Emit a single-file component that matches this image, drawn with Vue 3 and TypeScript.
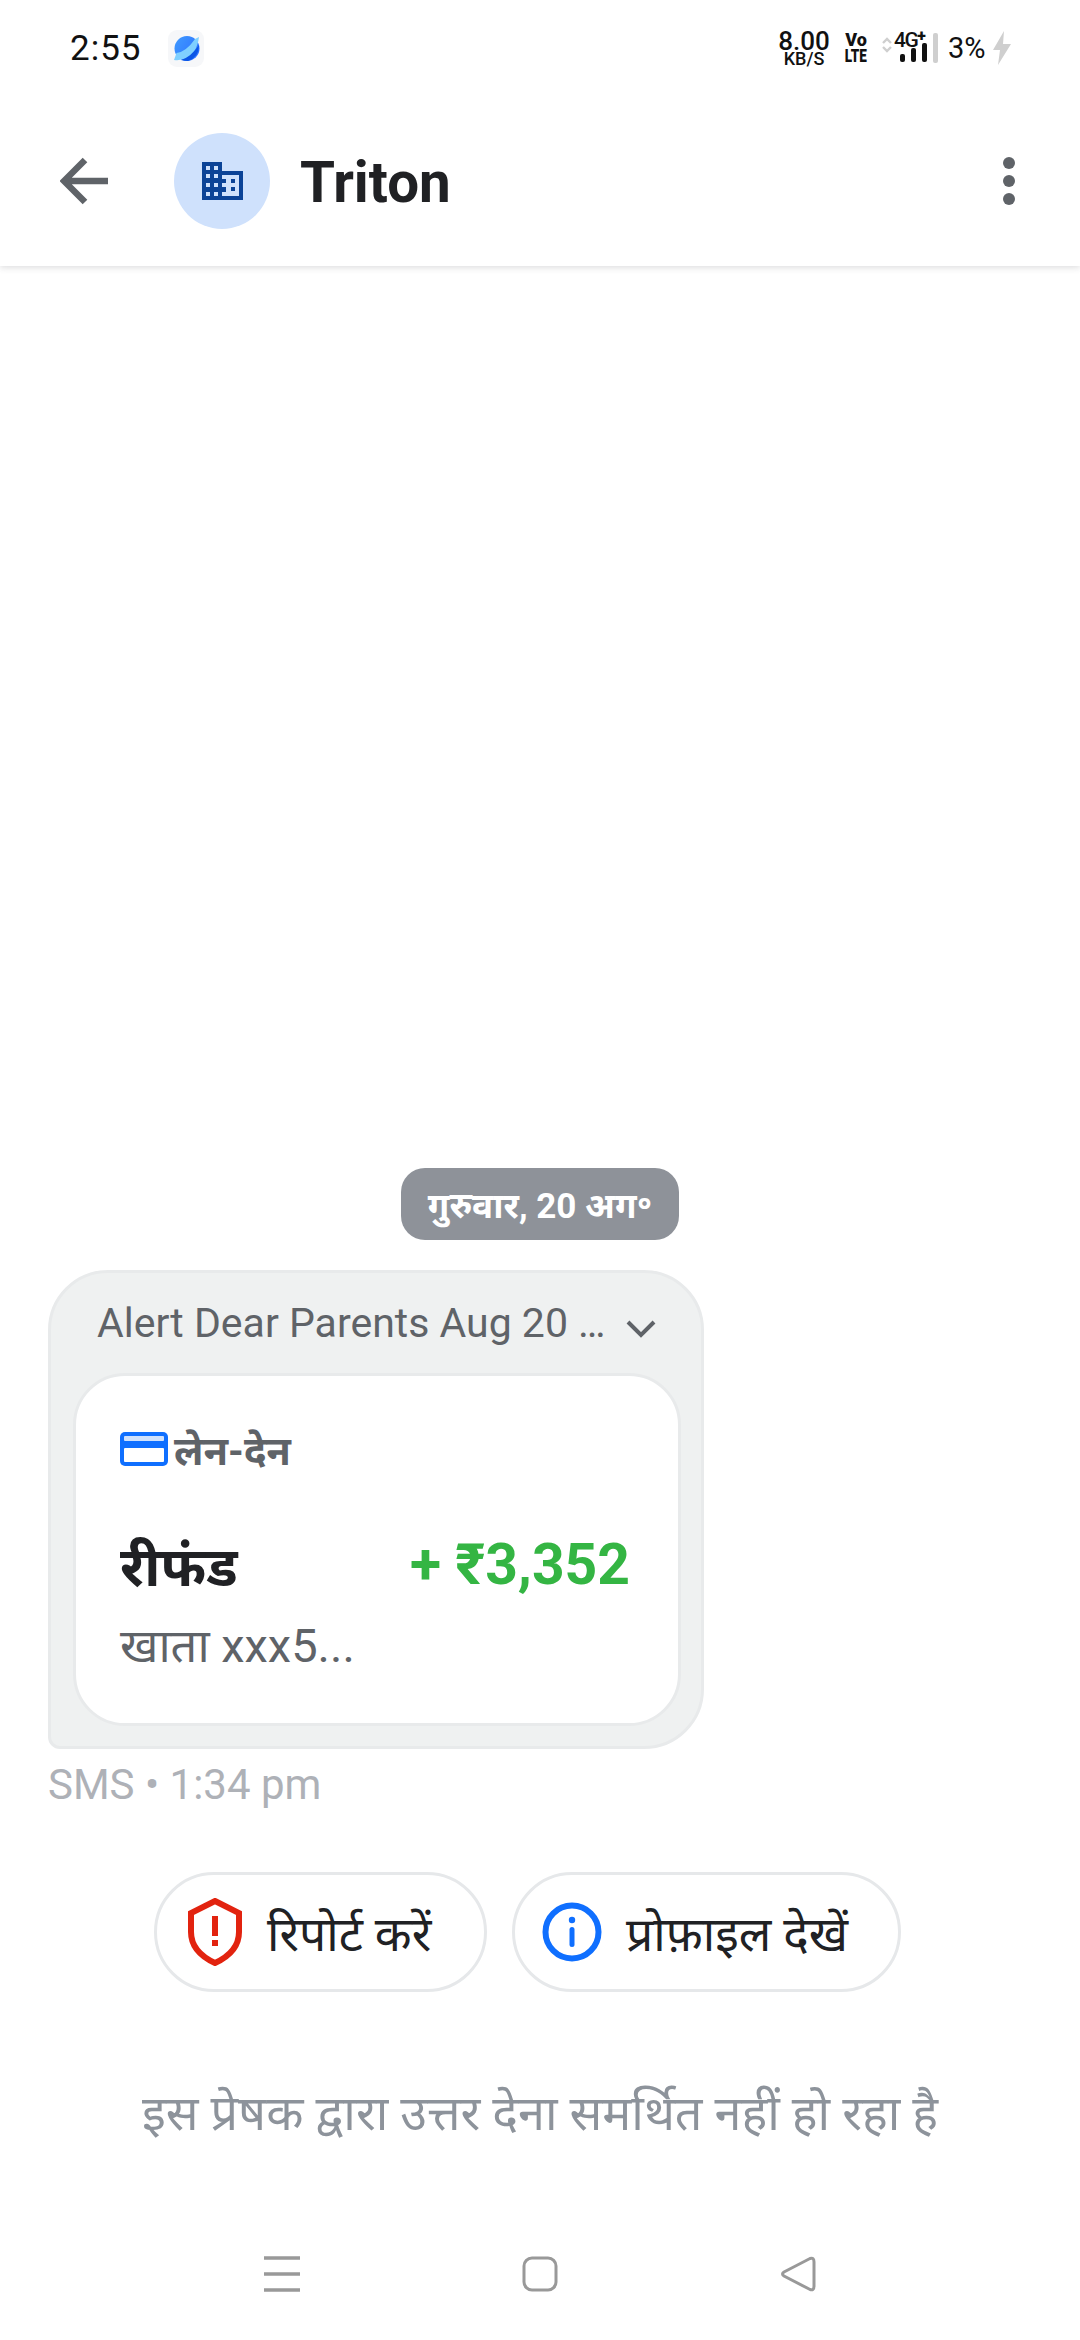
<script setup lang="ts">
const title = 'Triton'
</script>

<template>
  <div class="page">
    <div class="status">
      <span class="time">2:55</span>
      <svg class="appicon" viewBox="0 0 36 37" width="36" height="37">
        <defs>
          <linearGradient id="pl" x1="0" y1="0" x2="1" y2="0.6">
            <stop offset="0" stop-color="#3f9bff" />
            <stop offset="1" stop-color="#2f74ff" />
          </linearGradient>
        </defs>
        <rect width="36" height="37" rx="9" fill="#f6f7f9" />
        <circle cx="19" cy="18.5" r="12.5" fill="url(#pl)" />
        <path d="M6 30 L8.5 23 Q18 22 27 9 L31 7 Q30 18 22 27 Q14 31 6 30Z" fill="#7fd0ff" />
        <path d="M13 30 Q23 27 31 15 Q31 27 20 31 Q16 31 13 30Z" fill="#0a55e6" />
      </svg>
      <span class="grow"></span>
      <div class="speed"><b>8.00</b><i>KB/S</i></div>
      <div class="volte"><b class="vo">Vo</b><b class="lte">LTE</b></div>
      <svg class="arrows" viewBox="0 0 10 16" width="10" height="16">
        <path d="M1 6 L5 2 L9 6 M1 10 L5 14 L9 10" fill="none" stroke="#cfcfcf" stroke-width="2.4" />
      </svg>
      <div class="signal">
        <span class="fourg">4G<sup>+</sup></span>
        <div class="bars"><i class="b1"></i><i class="b2"></i><i class="b3"></i></div>
      </div>
      <i class="bar-off"></i>
      <span class="pct">3%</span>
      <svg class="bolt" viewBox="0 0 20 36" width="20" height="36">
        <path d="M12 1 L1 20 H8 L6 35 L19 14 H11Z" fill="#cfcfcf" />
      </svg>
    </div>

    <header class="head">
      <svg class="back" viewBox="0 0 48 48" width="48" height="48">
        <path d="M48 24 H4 M25 3 L4 24 L25 45" fill="none" stroke="#5f6368" stroke-width="6.5" />
      </svg>
      <div class="avatar">
        <svg viewBox="0 0 41 38" width="41" height="38">
          <path d="M0 0 H20 V9 H41 V38 H0Z" fill="#0b4397" />
          <g fill="#cfe1fc">
            <rect x="4" y="4" width="4" height="4" /><rect x="12" y="4" width="4" height="4" />
            <rect x="4" y="12" width="4" height="4" /><rect x="12" y="12" width="4" height="4" />
            <rect x="4" y="21" width="4" height="4" /><rect x="12" y="21" width="4" height="4" />
            <rect x="4" y="30" width="4" height="4" /><rect x="12" y="30" width="4" height="4" />
            <path d="M20 13 H37 V34 H20 V30 H24 V25 H20 V21 H24 V17 H20Z" />
          </g>
          <g fill="#0b4397">
            <rect x="29" y="17" width="4" height="4" /><rect x="29" y="25" width="4" height="4" />
          </g>
        </svg>
      </div>
      <h1 class="title">{{ title }}</h1>
      <span class="grow"></span>
      <div class="dots"><i></i><i></i><i></i></div>
    </header>

    <main class="thread">
      <div class="datewrap"><span class="date">गुरुवार, 20 अग॰</span></div>

      <div class="bubble">
        <div class="bubblehead">
          <span class="subject">Alert Dear Parents Aug 20 …</span>
          <svg viewBox="0 0 30 18" width="30" height="18">
            <path d="M2 2 L15 15 L28 2" fill="none" stroke="#5f6368" stroke-width="4" />
          </svg>
        </div>
        <div class="card">
          <div class="cat">
            <svg viewBox="0 0 48 34" width="48" height="34">
              <rect width="48" height="34" rx="5" fill="#0f6fff" />
              <rect x="4" y="4" width="40" height="5" rx="1" fill="#cfe1fc" />
              <rect x="4" y="16" width="40" height="14" rx="1" fill="#fff" />
            </svg>
            <span>लेन-देन</span>
          </div>
          <div class="row">
            <span class="kind">रीफंड</span>
            <span class="amount">+ ₹3,352</span>
          </div>
          <div class="acct">खाता xxx5...</div>
        </div>
      </div>

      <div class="meta">SMS • 1:34 pm</div>

      <div class="actions">
        <button class="pill p1">
          <svg viewBox="0 0 56 68" width="56" height="68">
            <path d="M28 3 L52 15 V34 C52 49 41 59 28 65 C15 59 4 49 4 34 V15Z" fill="none" stroke="#e2230f" stroke-width="6" />
            <rect x="25" y="18" width="6" height="20" fill="#e2230f" />
            <rect x="25" y="42" width="6" height="6" fill="#e2230f" />
          </svg>
          <span>रिपोर्ट करें</span>
        </button>
        <button class="pill p2">
          <svg viewBox="0 0 60 60" width="60" height="60">
            <circle cx="30" cy="30" r="26.5" fill="none" stroke="#0f6fff" stroke-width="6" />
            <circle cx="30" cy="18" r="3.2" fill="#0f6fff" />
            <rect x="27.5" y="25" width="5" height="20" rx="2.5" fill="#0f6fff" />
          </svg>
          <span>प्रोफ़ाइल देखें</span>
        </button>
      </div>

      <p class="note">इस प्रेषक द्वारा उत्तर देना समर्थित नहीं हो रहा है</p>
    </main>

    <nav class="navbar">
      <svg viewBox="0 0 36 36" width="36" height="36">
        <path d="M0 2 H36 M0 18 H36 M0 34 H36" stroke="#999" stroke-width="3.4" />
      </svg>
      <svg viewBox="0 0 36 36" width="36" height="36">
        <rect x="2" y="2" width="32" height="32" rx="8" fill="none" stroke="#999" stroke-width="3" />
      </svg>
      <svg viewBox="0 0 36 36" width="36" height="36">
        <path d="M30 2.5 Q34 1 34 6 V30 Q34 35 30 33.5 L4 20 Q1 18 4 16Z" fill="none" stroke="#999" stroke-width="3" />
      </svg>
    </nav>
  </div>
</template>

<style>
html, body { margin: 0; background: #fff; }
</style>

<style scoped>
.page {
  width: 1080px;
  height: 2340px;
  display: flex;
  flex-direction: column;
  background: #fff;
  font-family: Roboto, "Noto Sans", "Liberation Sans", sans-serif;
  overflow: hidden;
}
.grow { flex: 1; }
.status {
  height: 96px;
  flex: none;
  box-sizing: border-box;
  padding: 0 68px 0 70px;
  display: flex;
  align-items: center;
  color: #111;
}
.time { font-size: 35px; letter-spacing: 1px; width: 98px; }
.speed { display: flex; flex-direction: column; align-items: center; width: 52px; margin-right: 15px; }
.speed b { font-weight: 500; font-size: 26px; line-height: 21px; }
.speed i { font-style: normal; font-weight: 500; font-size: 18px; line-height: 14px; }
.volte { display: flex; flex-direction: column; align-items: center; width: 22px; margin-right: 15px; }
.volte b { font-size: 18px; line-height: 16px; font-weight: 900; display: block; }
.lte { transform: scaleX(.75); }
.arrows { flex: none; margin-right: 2px; margin-top: -7px; }
.signal { display: flex; flex-direction: column; align-items: flex-start; width: 33px; margin-right: 6px; height: 30px; }
.fourg { font-size: 21px; font-weight: 500; line-height: 15px; letter-spacing: -1.5px; white-space: nowrap; }
.fourg sup { font-size: 16px; line-height: 0; font-weight: 900; vertical-align: 6px; }
.bars { display: flex; gap: 6px; align-items: flex-end; height: 19px; margin-top: -5px; padding-left: 6px; }
.bars i { width: 5px; background: #111; border-radius: 2px; display: block; }
.b1 { height: 8px; }
.b2 { height: 14px; }
.b3 { height: 19px; }
.bar-off { width: 5px; height: 30px; background: #cfcfcf; border-radius: 2px; margin-right: 10px; }
.pct { font-size: 29px; width: 37px; margin-right: 7px; white-space: nowrap; }

.head {
  height: 170px;
  flex: none;
  box-sizing: border-box;
  display: flex;
  align-items: center;
  padding: 0 65px 0 60px;
  background: #fff;
  box-shadow: 0 2px 6px rgba(60, 64, 67, .16);
  clip-path: inset(0 0 -20px 0);
  position: relative;
  z-index: 1;
}
.back { flex: none; }
.avatar {
  width: 96px;
  height: 96px;
  margin: -1px 0 0 66px;
  border-radius: 50%;
  background: #cfe1fc;
  display: flex;
  align-items: center;
  justify-content: center;
  flex: none;
}
.title {
  margin: 3px 0 0 30px;
  font-size: 56.5px;
  line-height: 64px;
  font-weight: 700;
  color: #202124;
}
.dots { display: flex; flex-direction: column; gap: 6px; }
.dots i { display: block; width: 12px; height: 12px; border-radius: 50%; background: #5f6368; }

.thread { flex: 1; display: flex; flex-direction: column; justify-content: flex-end; min-height: 0; padding-bottom: 64px; }
.datewrap { display: flex; justify-content: center; }
.date {
  width: 278px;
  height: 72px;
  display: flex;
  align-items: center;
  justify-content: center;
  background: #8e9299;
  color: #fff;
  font-size: 35px;
  font-weight: 700;
  border-radius: 24px;
  white-space: nowrap;
}
.bubble {
  width: 656px;
  height: 479px;
  box-sizing: border-box;
  margin: 30px 0 0 48px;
  background: #eff1f1;
  border: 3px solid #e8eaeb;
  border-radius: 60px 60px 60px 12px;
  padding: 0 20px 0 22px;
  display: flex;
  flex-direction: column;
}
.bubblehead {
  height: 100px;
  flex: none;
  display: flex;
  align-items: center;
  gap: 20px;
  padding-left: 24px;
  color: #5f6368;
  font-size: 41px;
}
.bubblehead svg { margin-top: 12px; flex: none; }
.subject { white-space: nowrap; }
.card {
  height: 353px;
  box-sizing: border-box;
  background: #fff;
  border: 3px solid #e8eaeb;
  border-radius: 52px;
  padding: 49px 48px 0 44px;
}
.cat { display: flex; align-items: center; gap: 6px; color: #5f6368; font-size: 40px; font-weight: 700; height: 48px; }
.row { display: flex; justify-content: space-between; align-items: center; margin-top: 56px; height: 70px; }
.kind { font-size: 55px; font-weight: 700; color: #202124; }
.amount { font-size: 57px; font-weight: 700; color: #34b543; }
.acct { font-size: 47px; color: #5f6368; margin-top: 19px; line-height: 56px; }
.meta { margin: 11px 0 0 48px; font-size: 42px; line-height: 50px; color: #aeb1b7; }
.actions { display: flex; gap: 25px; margin: 62px 0 0 154px; }
.pill {
  height: 120px;
  box-sizing: border-box;
  background: #fff;
  border: 3px solid #e6e8ea;
  border-radius: 60px;
  display: flex;
  align-items: center;
  font: inherit;
  font-size: 48px;
  color: #202124;
  padding: 0;
}
.p1 { width: 333px; padding-left: 30px; gap: 24px; }
.p2 { width: 389px; padding-left: 27px; gap: 24px; }
.note { margin: 92px 0 0; text-align: center; font-size: 48.5px; line-height: 60px; color: #8d939b; white-space: nowrap; }
.navbar {
  height: 132px;
  flex: none;
  box-sizing: border-box;
  padding-left: 264px;
  display: flex;
  gap: 222px;
  align-items: center;
}
</style>
